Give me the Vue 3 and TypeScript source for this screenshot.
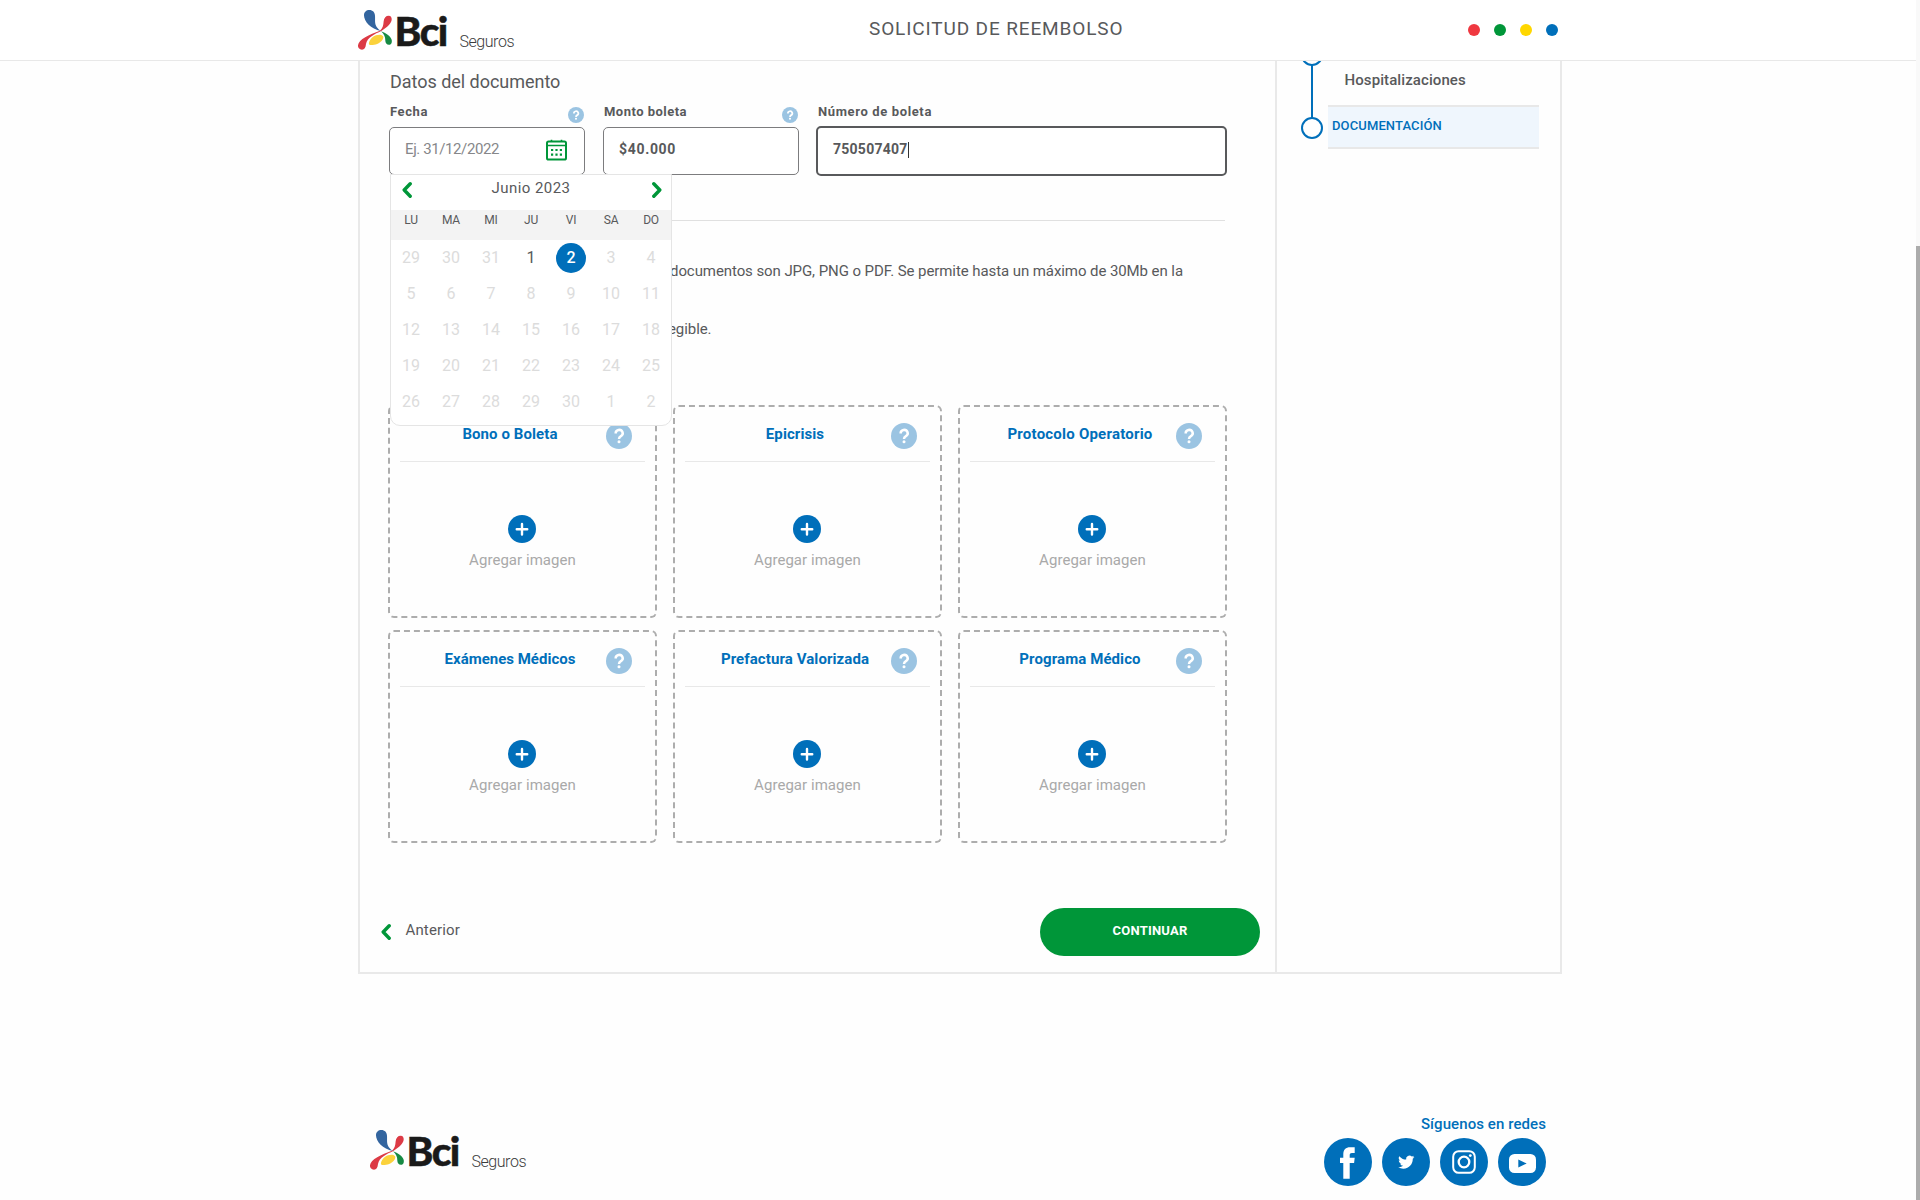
<script setup lang="ts">
interface Day { n: number; state?: 'on' | 'sel' }

const dots: string[] = ['#ef3840', '#009639', '#ffd700', '#006fba']
const weekdays: string[] = ['LU', 'MA', 'MI', 'JU', 'VI', 'SA', 'DO']
const days: Day[] = [
  { n: 29 }, { n: 30 }, { n: 31 },
  ...Array.from({ length: 30 }, (_, i): Day => ({
    n: i + 1,
    state: i === 0 ? 'on' : i === 1 ? 'sel' : undefined,
  })),
  { n: 1 }, { n: 2 },
]
const cards: { title: string; ls: string }[] = [
  { title: 'Bono o Boleta', ls: 'n' },
  { title: 'Epicrisis', ls: 'n' },
  { title: 'Protocolo Operatorio', ls: 'w' },
  { title: 'Exámenes Médicos', ls: 'z' },
  { title: 'Prefactura Valorizada', ls: 'n' },
  { title: 'Programa Médico', ls: 'n' },
]
</script>

<template>
  <div class="page">
    <div class="view">
      <header class="top">
        <svg class="logo" width="160" height="44" viewBox="0 0 160 44">
          <g transform="translate(-18 -9) scale(.33333)">
            <path fill="#dc3a45" d="M120 92 C128 85 130 77 131 64 C132 53 138 47 146 47 C153 47 156 53 155 60 C153 72 138 84 124 93 C104 102 82 112 78 132 C77 143 73 149 66 149 C58 149 53 143 54 136 C56 117 88 104 120 92Z" />
            <path fill="#33659f" d="M123 93 C92 88 72 64 72 46 C72 36 79 30 88 30 C98 30 105 37 105 47 C106 59 103 69 110 81 C114 87 119 90 123 93Z" />
            <path fill="#fbd23c" d="M87 128 C90 114 105 103 121 104 C130 106 133 111 127 120 C119 132 101 136 91 135 C87 134 86 132 87 128Z" />
            <path fill="#168a43" d="M123 94 C138 99 151 108 155 119 C157 128 153 134 147 134 C140 134 136 129 136 122 C136 110 132 102 123 94Z" />
          </g>
          <text x="36.600" y="37.300" class="bci" textLength="53.600">Bci</text>
          <text x="101.500" y="37.500" class="seg" textLength="55">Seguros</text>
        </svg>
        <h1>SOLICITUD DE REEMBOLSO</h1>
        <div class="dots"><i v-for="d in dots" :key="d" :style="{ background: d }" /></div>
      </header>

      <main class="panel">
        <section class="form">
          <h2>Datos del documento</h2>
          <div class="fields">
            <div class="field date">
              <div class="lab"><label class="l1">Fecha</label>
                <svg width="16" height="16" viewBox="0 0 26 26"><circle cx="13" cy="13" r="13" fill="#9bc4e2" /><path d="M9.600 10.500 a3.600 3.400 0 1 1 5.400 2.700 q-2 1.100 -2 3" fill="none" stroke="#fff" stroke-width="2.800" /><circle cx="13" cy="19.200" r="1.700" fill="#fff" /></svg>
              </div>
              <div class="box">
                <span class="ph">Ej. 31/12/2022</span>
                <svg class="cal" width="21" height="22" viewBox="0 0 21 22">
                  <rect x="1" y="2.500" width="19" height="18" rx="1.600" fill="none" stroke="#009639" stroke-width="2" />
                  <path d="M0.500 6.500H20.500M5.500 0.800V3M15.500 0.800V3" stroke="#009639" stroke-width="1.600" />
                  <path d="M5 11h2.200M9.400 11h2.200M13.800 11H16M5 15.700h2.200M9.400 15.700h2.200M13.800 15.700H16" stroke="#009639" stroke-width="2.200" />
                </svg>
              </div>
              <div class="popup">
                <div class="month">
                  <svg width="10" height="16" viewBox="0 0 10 16"><path d="M8.200 1.800L2.200 8l6 6.200" /></svg>
                  <span>Junio 2023</span>
                  <svg width="10" height="16" viewBox="0 0 10 16"><path d="M1.800 1.800L7.800 8l-6 6.200" /></svg>
                </div>
                <div class="week"><span v-for="w in weekdays" :key="w">{{ w }}</span></div>
                <div class="days"><span v-for="(d, i) in days" :key="i" :class="d.state"><b>{{ d.n }}</b></span></div>
              </div>
            </div>
            <div class="field amount">
              <div class="lab"><label class="l2">Monto boleta</label>
                <svg width="16" height="16" viewBox="0 0 26 26"><circle cx="13" cy="13" r="13" fill="#9bc4e2" /><path d="M9.600 10.500 a3.600 3.400 0 1 1 5.400 2.700 q-2 1.100 -2 3" fill="none" stroke="#fff" stroke-width="2.800" /><circle cx="13" cy="19.200" r="1.700" fill="#fff" /></svg>
              </div>
              <div class="box"><span class="val v1">$40.000</span></div>
            </div>
            <div class="field number">
              <div class="lab"><label class="l3">Número de boleta</label></div>
              <div class="box focus"><span class="val v2">750507407</span><i class="caret" /></div>
            </div>
          </div>
          <hr>
          <div class="info">
            <p>documentos son JPG, PNG o PDF. Se permite hasta un máximo de 30Mb en la</p>
            <p class="second">egible.</p>
          </div>
          <div class="cards">
            <article v-for="c in cards" :key="c.title" class="card">
              <div class="chead">
                <h3 :class="c.ls">{{ c.title }}</h3>
                <svg width="26" height="26" viewBox="0 0 26 26"><circle cx="13" cy="13" r="13" fill="#9bc4e2" /><path d="M9.700 10.500 a3.500 3.300 0 1 1 5.200 2.600 q-1.900 1.100 -1.900 3" fill="none" stroke="#fff" stroke-width="2.500" /><circle cx="13" cy="18.700" r="1.500" fill="#fff" /></svg>
              </div>
              <div class="cbody">
                <svg width="28" height="28" viewBox="0 0 28 28"><circle cx="14" cy="14" r="14" fill="#006fba" /><path d="M14 9v10.500M8.750 14.250h10.500" stroke="#fff" stroke-width="2.400" stroke-linecap="round" /></svg>
                <span>Agregar imagen</span>
              </div>
            </article>
          </div>
          <div class="nav">
            <a class="back"><svg width="10" height="16" viewBox="0 0 10 16"><path d="M8.200 1.800L2.200 8l6 6.200" /></svg><span>Anterior</span></a>
            <button>CONTINUAR</button>
          </div>
        </section>
        <aside class="steps">
          <svg width="22" height="95" viewBox="0 0 22 95" fill="none" stroke="#006fba" stroke-width="2">
            <circle cx="11" cy="-6" r="10" /><path d="M11 4V57" /><circle cx="11" cy="67" r="10" />
          </svg>
          <div class="list">
            <div class="s1">Hospitalizaciones</div>
            <div class="s2">DOCUMENTACIÓN</div>
          </div>
        </aside>
      </main>

      <footer class="foot">
        <svg class="logo" width="160" height="44" viewBox="0 0 160 44">
          <g transform="translate(-18 -9) scale(.33333)">
            <path fill="#dc3a45" d="M120 92 C128 85 130 77 131 64 C132 53 138 47 146 47 C153 47 156 53 155 60 C153 72 138 84 124 93 C104 102 82 112 78 132 C77 143 73 149 66 149 C58 149 53 143 54 136 C56 117 88 104 120 92Z" />
            <path fill="#33659f" d="M123 93 C92 88 72 64 72 46 C72 36 79 30 88 30 C98 30 105 37 105 47 C106 59 103 69 110 81 C114 87 119 90 123 93Z" />
            <path fill="#fbd23c" d="M87 128 C90 114 105 103 121 104 C130 106 133 111 127 120 C119 132 101 136 91 135 C87 134 86 132 87 128Z" />
            <path fill="#168a43" d="M123 94 C138 99 151 108 155 119 C157 128 153 134 147 134 C140 134 136 129 136 122 C136 110 132 102 123 94Z" />
          </g>
          <text x="36.600" y="37.300" class="bci" textLength="53.600">Bci</text>
          <text x="101.500" y="37.500" class="seg" textLength="55">Seguros</text>
        </svg>
        <div class="social">
          <span>Síguenos en redes</span>
          <div class="nets">
            <svg width="48" height="48" viewBox="0 0 48 48"><circle cx="24" cy="24" r="24" fill="#006fba" /><path fill="#fff" d="M19.300 40.700V25H16V19.700h3.300v-3.500c0-4.500 2.500-7 6.800-7h4.600v5.700h-2.800c-1.500 0-2.200.7-2.200 2.200v2.600h5l-.6 5.300h-4.400V40.700Z" /></svg>
            <svg width="48" height="48" viewBox="0 0 48 48"><circle cx="24" cy="24" r="24" fill="#006fba" /><path fill="#fff" transform="translate(16.200 16) scale(.675)" d="M23.950 4.570a10 10 0 0 1-2.820.77 4.960 4.960 0 0 0 2.160-2.720c-.95.550-2 .950-3.130 1.180a4.920 4.920 0 0 0-8.380 4.480C7.690 8.100 4.070 6.130 1.640 3.160a4.920 4.920 0 0 0 1.520 6.570 4.900 4.900 0 0 1-2.230-.610v.060a4.920 4.920 0 0 0 3.950 4.830 5 5 0 0 1-2.210.080 4.940 4.940 0 0 0 4.600 3.420A9.870 9.870 0 0 1 0 19.540a13.990 13.990 0 0 0 7.550 2.210c9.050 0 14-7.500 14-13.980 0-.210 0-.420-.020-.630a9.940 9.940 0 0 0 2.420-2.570z" /></svg>
            <svg width="48" height="48" viewBox="0 0 48 48"><circle cx="24" cy="24" r="24" fill="#006fba" /><rect x="13.200" y="13.200" width="21.600" height="21.600" rx="5.500" fill="none" stroke="#fff" stroke-width="2" /><circle cx="24" cy="24" r="5.300" fill="none" stroke="#fff" stroke-width="2.300" /><circle cx="30.300" cy="17.600" r="1.400" fill="#fff" /></svg>
            <svg width="48" height="48" viewBox="0 0 48 48"><circle cx="24" cy="24" r="24" fill="#006fba" /><rect x="11" y="16" width="27" height="19" rx="5.500" fill="#fff" /><path d="M20.300 21.500v8l8.400-4z" fill="#006fba" /></svg>
          </div>
        </div>
      </footer>
    </div>
    <div class="scroll"><div class="thumb" /></div>
  </div>
</template>

<style>
body { margin: 0; background: #fff; overflow: hidden; }
</style>

<style scoped>
* { box-sizing: border-box; }
.page { display: flex; width: 1920px; height: 1200px; overflow: hidden; background: #fefefe; color: #58595b; font-family: Roboto, "Open Sans", sans-serif; }
.view { width: 1916px; display: flex; flex-direction: column; }
.scroll { width: 4px; background: #f9f9f9; padding-top: 246px; }
.thumb { height: 954px; background: #acacac; }
svg { display: block; flex: none; }
h1, h2, h3, p { margin: 0; font-weight: 400; }

.top { height: 61px; flex: none; display: flex; background: #fff; border-bottom: 1px solid #e8e8e8; padding: 9px 0 0 358px; }
.logo { overflow: visible; }
.bci { font: 900 40.500px Lato, sans-serif; fill: #1a1a1a; stroke: #1a1a1a; stroke-width: .5px; }
.seg { font: 300 16px Roboto, sans-serif; fill: #3c3c3c; }
.top h1 { width: 256px; margin: 8px 0 0 351px; font-size: 19px; line-height: 24px; letter-spacing: .87px; white-space: nowrap; font-weight: 400; }
.dots { display: flex; gap: 14px; margin: 15px 0 0 343px; }
.dots i { width: 12px; height: 12px; border-radius: 50%; }

.panel { margin-left: 358px; width: 1204px; height: 913px; flex: none; border: 2px solid #e9e9e9; border-top: 0; display: flex; }
.form { width: 917px; border-right: 2px solid #e9e9e9; flex: none; }
h2 { margin: 9px 0 0 30px; font-size: 18px; line-height: 24px; letter-spacing: -.03px; }
.fields { display: flex; margin: 8px 0 0 29px; }
.field { position: relative; width: 196px; }
.amount { margin-left: 18px; }
.number { margin-left: 17px; width: 411px; }
.lab { height: 25px; display: flex; justify-content: space-between; padding: 0 1px 0 1px; }
.lab svg { margin-top: 4.500px; }
.number .lab { padding-left: 2px; }
label { font-size: 13px; line-height: 20px; font-weight: 700; }
.l1 { letter-spacing: .6px; } .l2 { letter-spacing: .48px; } .l3 { letter-spacing: .63px; }
.box { height: 48px; border: 1px solid #7c7c7e; border-radius: 5px; background: #fff; padding: 10px 17px 0 15px; display: flex; justify-content: space-between; line-height: 22px; }
.ph { font-size: 15px; letter-spacing: -.4px; color: #86878a; }
.cal { margin-top: 1px; }
.val { font-size: 14px; font-weight: 700; }
.v1 { letter-spacing: .68px; } .v2 { letter-spacing: .25px; }
.focus { margin-top: -1px; height: 50px; border: 2px solid #58595b; justify-content: flex-start; padding-left: 15px; }
.caret { width: 1px; height: 16px; background: #333; margin: 4px 0 0; }

.popup { position: absolute; z-index: 2; left: 1px; top: 72px; width: 282px; height: 252px; background: #fff; border: 1px solid #e5e5e5; border-radius: 0 0 10px 10px; overflow: hidden; }
.month { height: 35px; padding: 7px 9px 0 11px; display: flex; justify-content: space-between; font-size: 15px; line-height: 16px; letter-spacing: .45px; }
.month span { line-height: 14px; margin: -1px 2px 0 0; }
.month svg, .back svg { fill: none; stroke: #009639; stroke-width: 3.400px; stroke-linecap: round; stroke-linejoin: round; }
.week { height: 30px; background: #f3f3f3; display: flex; }
.week span { width: 40px; text-align: center; font-size: 12px; line-height: 20px; letter-spacing: -.2px; }
.days { display: flex; flex-wrap: wrap; }
.days span { width: 40px; height: 36px; display: flex; justify-content: center; padding-top: 3px; font-size: 16px; line-height: 29px; color: #dcdcdc; }
.days b { font-weight: 400; width: 30px; height: 30px; text-align: center; border-radius: 50%; }
.days .on { color: #58595b; }
.days .sel b { background: #006fba; color: #fff; font-weight: 500; }

hr { border: 0; height: 1px; background: #e0e0e0; margin: 44px 0 0 30px; width: 835px; }
.info { margin: 36px 0 0 310px; height: 87px; font-size: 15px; line-height: 29px; display: flex; flex-direction: column; gap: 29px; }
.info p { height: 29px; white-space: nowrap; letter-spacing: -.08px; }
.info .second { margin-left: -2px; }

.cards { display: grid; grid-template-columns: repeat(3, 269px); gap: 12px 16px; margin: 61px 0 0 28px; }
.card { height: 213px; border: 2px dashed #adadad; border-radius: 6px; }
.chead { height: 55px; margin: 0 10px; border-bottom: 1px solid #e8e8e8; display: flex; padding-left: 14px; }
.chead h3 { width: 192px; margin-top: 17px; text-align: center; font-size: 15px; font-weight: 700; line-height: 20px; color: #006fba; white-space: nowrap; }
.n { letter-spacing: .09px; } .w { letter-spacing: .22px; } .z { letter-spacing: 0; }
.chead svg { margin-top: 16px; }
.cbody { display: flex; flex-direction: column; align-items: center; padding-top: 53px; gap: 7px; font-size: 15px; line-height: 20px; letter-spacing: .05px; color: #a9a9a9; }
.cbody svg { margin-right: 1px; }

.nav { display: flex; justify-content: space-between; margin: 65px 15px 0 21px; height: 48px; }
.back { display: flex; padding-top: 16px; font-size: 15px; line-height: 20px; letter-spacing: .15px; }
.back svg { margin-left: -.5px; }
.back span { margin: -4px 0 0 15px; }
button { width: 220px; height: 48px; padding: 0 0 3px; border: 0; border-radius: 24px; background: #009639; color: #fff; font: 700 13px/20px Roboto, sans-serif; letter-spacing: .22px; }

.steps { display: flex; padding-left: 24px; }
.list { margin-left: 5px; }
.s1 { height: 44px; padding: 9px 0 0 16.500px; font-size: 15px; line-height: 20px; font-weight: 500; letter-spacing: .09px; }
.s2 { width: 211px; height: 44px; background: #eff6fd; border: 2px solid #e8e8e8; border-left: 0; border-right: 0; padding: 9px 0 0 4px; font-size: 13px; line-height: 20px; letter-spacing: .12px; color: #006fba; font-weight: 500; }

.foot { display: flex; justify-content: space-between; margin: 140px 370px 0 370px; height: 86px; }
.foot .logo { margin-top: 15px; }
.social { display: flex; flex-direction: column; align-items: flex-end; color: #006fba; font-size: 15px; line-height: 20px; font-weight: 500; letter-spacing: .08px; gap: 4px; }
.nets { display: flex; gap: 10px; }
</style>
